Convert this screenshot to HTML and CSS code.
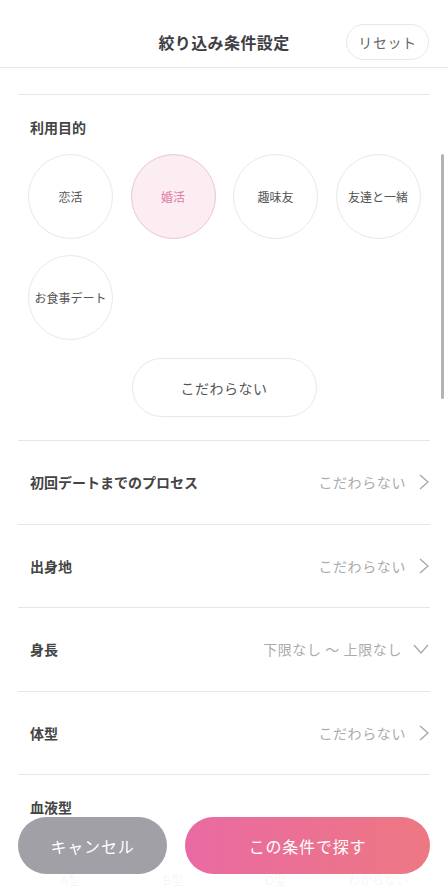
FILE: index.html
```html
<!DOCTYPE html>
<html lang="ja">
<head>
<meta charset="utf-8">
<title>絞り込み条件設定</title>
<link rel="stylesheet" href="styles.css">
</head>
<body>
<div class="app">
  <header class="header">
    <h1 class="title">絞り込み条件設定</h1>
    <button class="reset">リセット</button>
  </header>
  <main class="content">
    <div class="top-gap"></div>
    <section class="section purpose">
      <h2 class="section-title">利用目的</h2>
      <div class="circles">
        <div class="circle">恋活</div>
        <div class="circle selected">婚活</div>
        <div class="circle">趣味友</div>
        <div class="circle">友達と一緒</div>
        <div class="circle">お食事デート</div>
      </div>
      <div class="pill-wrap"><div class="pill">こだわらない</div></div>
    </section>
    <div class="row">
      <span class="label">初回デートまでのプロセス</span>
      <span class="value">こだわらない<svg class="chev" width="12" height="18" viewBox="0 0 12 18"><polyline points="2,2 10,9 2,16" fill="none" stroke="#aaa" stroke-width="1.4"/></svg></span>
    </div>
    <div class="row">
      <span class="label">出身地</span>
      <span class="value">こだわらない<svg class="chev" width="12" height="18" viewBox="0 0 12 18"><polyline points="2,2 10,9 2,16" fill="none" stroke="#aaa" stroke-width="1.4"/></svg></span>
    </div>
    <div class="row">
      <span class="label">身長</span>
      <span class="value">下限なし 〜 上限なし<svg class="chev down" width="18" height="14" viewBox="0 0 18 14"><polyline points="2,3 9,11 16,3" fill="none" stroke="#aaa" stroke-width="1.4"/></svg></span>
    </div>
    <div class="row">
      <span class="label">体型</span>
      <span class="value">こだわらない<svg class="chev" width="12" height="18" viewBox="0 0 12 18"><polyline points="2,2 10,9 2,16" fill="none" stroke="#aaa" stroke-width="1.4"/></svg></span>
    </div>
    <section class="section blood">
      <h2 class="section-title">血液型</h2>
      <div class="circles">
        <div class="circle">A型</div>
        <div class="circle">B型</div>
        <div class="circle">O型</div>
        <div class="circle">わからない</div>
      </div>
    </section>
  </main>
  <div class="scrollbar"></div>
  <footer class="footer">
    <button class="btn cancel">キャンセル</button>
    <button class="btn search">この条件で探す</button>
  </footer>
</div>
</body>
</html>
```
FILE: styles.css
```css
* { box-sizing: border-box; }
html, body { margin: 0; padding: 0; height: 100%; overflow: hidden; background: #fff; }
body {
  font-family: "Noto Sans CJK JP", "Noto Sans", sans-serif;
  color: #444;
}
.app { position: relative; width: 448px; height: 896px; overflow: hidden; }
.header {
  height: 68px;
  border-bottom: 1px solid #e6e6e6;
  display: flex;
  align-items: center;
  justify-content: center;
  position: relative;
  padding-top: 16px;
}
.title {
  margin: 0;
  font-size: 16px;
  font-weight: 700;
  color: #3e3e45;
  line-height: 20px;
  letter-spacing: 0.4px;
}
.reset {
  position: absolute;
  right: 19px;
  top: 24px;
  width: 83px;
  height: 36px;
  border: 1px solid #e8e8e8;
  border-radius: 18px;
  background: #fff;
  font-family: inherit;
  font-size: 14px;
  color: #666;
  letter-spacing: 0.6px;
  padding: 0;
}
.content { padding: 0 18px; }
.top-gap { height: 27px; border-bottom: 1px solid #e6e6e6; }
.section { border-bottom: 1px solid #e6e6e6; }
.purpose { padding: 22px 0 23px; }
.section-title {
  margin: 0 0 0 12px;
  font-size: 14px;
  font-weight: 700;
  line-height: 20px;
  color: #444;
}
.circles {
  margin: 17px 0 0 10px;
  display: grid;
  grid-template-columns: repeat(4, 85px);
  column-gap: 17.5px;
  row-gap: 16px;
}
.circle {
  width: 85px;
  height: 85px;
  border-radius: 50%;
  border: 1px solid #ebe7e9;
  display: flex;
  align-items: center;
  justify-content: center;
  font-size: 12px;
  color: #555;
  white-space: nowrap;
}
.circle.selected {
  background: #fcedf3;
  border-color: #efc3d4;
  color: #e07ba8;
}
.pill-wrap { display: flex; justify-content: center; margin-top: 18px; }
.pill {
  width: 185px;
  height: 59px;
  border-radius: 30px;
  border: 1px solid #e8e8e8;
  display: flex;
  align-items: center;
  justify-content: center;
  font-size: 14px;
  color: #555;
  letter-spacing: 0.5px;
}
.row {
  height: 83.5px;
  border-bottom: 1px solid #e6e6e6;
  display: flex;
  align-items: center;
  justify-content: space-between;
  padding: 0 0 0 12px;
}
.label { font-size: 14px; font-weight: 700; color: #444; }
.value {
  display: flex;
  align-items: center;
  font-size: 14px;
  color: #ababab;
  letter-spacing: 0.6px;
}
.chev { margin-left: 12px; margin-right: 0; }
.chev.down { margin-left: 10px; }
.blood { padding-top: 22px; border-bottom: none; }
.blood .section-title { line-height: 20px; }
.blood .circles { margin-top: 20px; }
.blood .circle { color: #777; }
.scrollbar {
  position: absolute;
  right: 4px;
  top: 154px;
  width: 3px;
  height: 245px;
  border-radius: 2px;
  background: #b3b3b3;
}
.footer {
  position: absolute;
  left: 0;
  right: 0;
  bottom: 0;
  height: 80px;
  padding: 1px 18px 0;
  background: rgba(255, 255, 255, 0.93);
  display: grid;
  grid-template-columns: 149px 1fr;
  column-gap: 18px;
  align-items: start;
}
.btn {
  height: 57px;
  border: none;
  border-radius: 29px;
  font-family: inherit;
  font-size: 16px;
  color: #fff;
  letter-spacing: 0.8px;
  padding: 0;
}
.cancel { background: #a1a0a6; }
.search { background: linear-gradient(90deg, #e96aa3, #ed7882); }
```
